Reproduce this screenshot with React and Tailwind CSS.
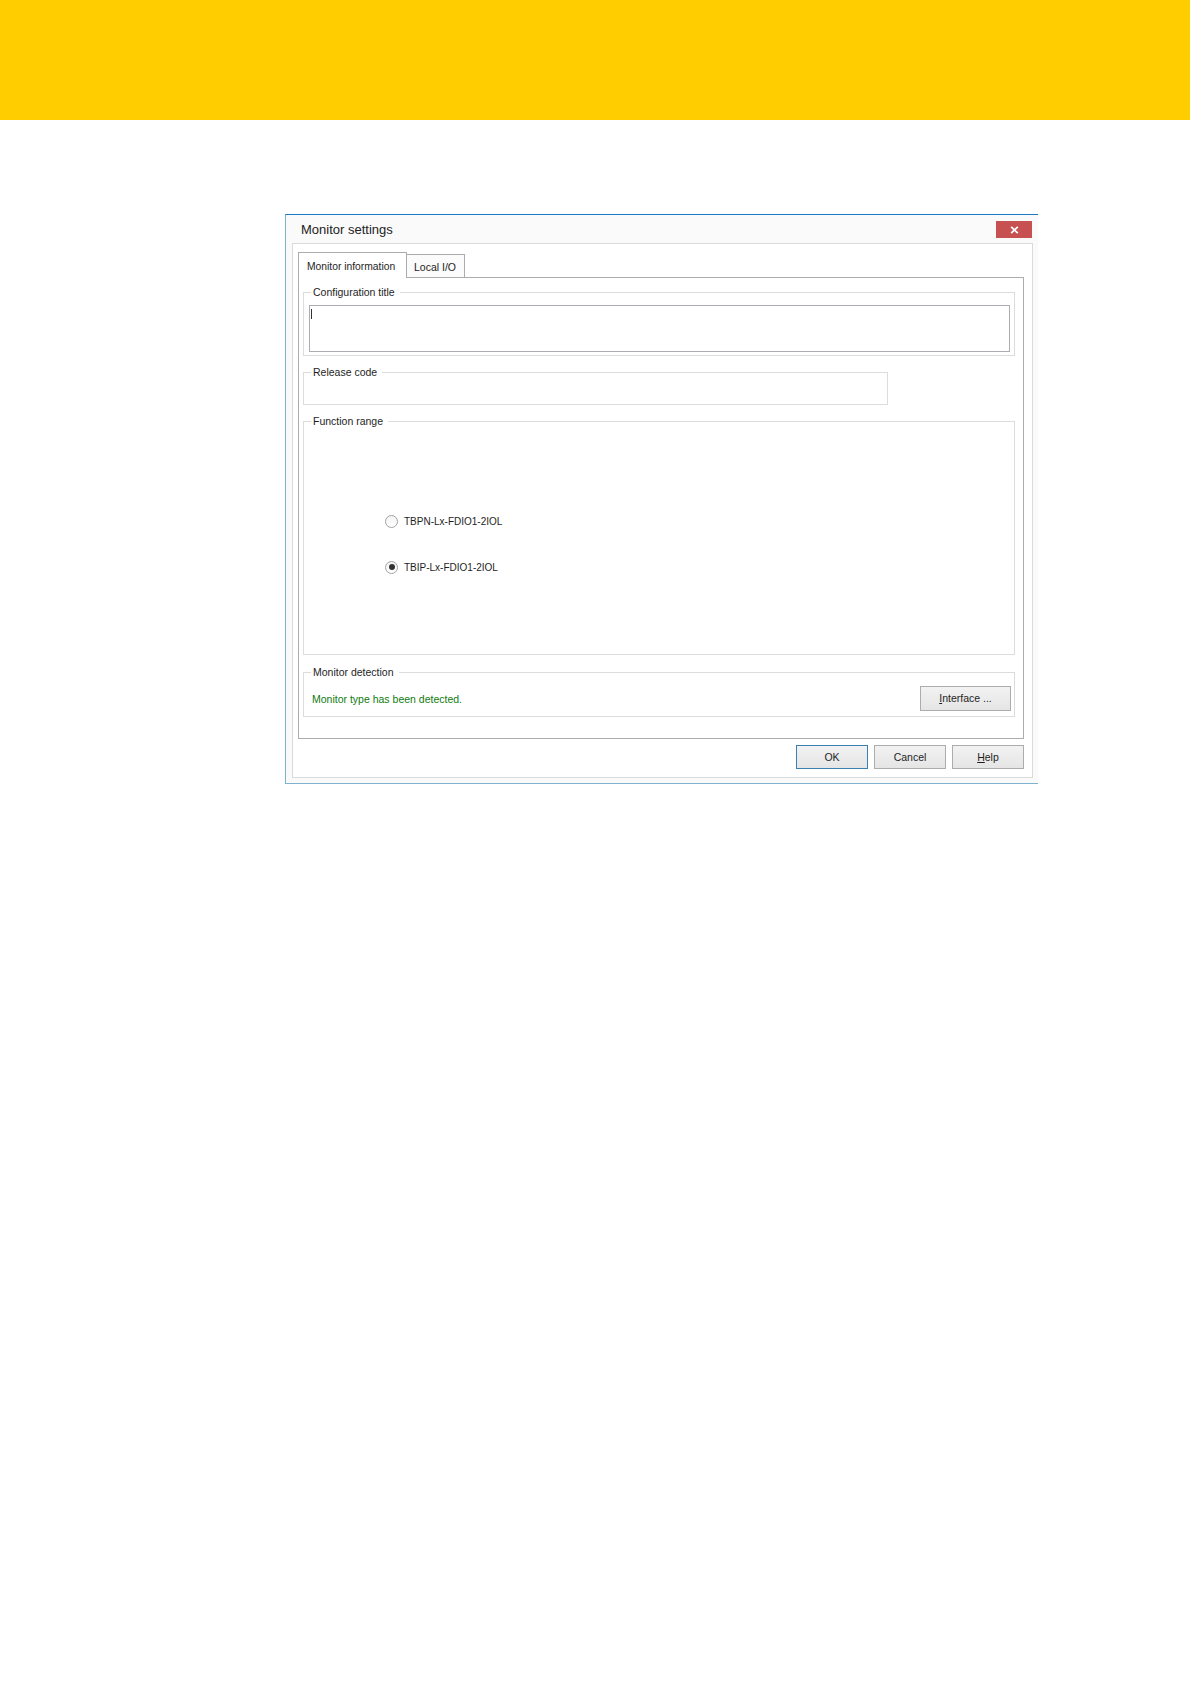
import React from "react";

function Group({ label, className, children }) {
  return (
    <div className={"relative border border-[#dcdcdc] " + className}>
      <span className="absolute -top-[7px] left-[7px] bg-white pl-[2px] pr-[5px] text-[10.5px] leading-[13px] text-[#1e1e1e] whitespace-nowrap">
        {label}
      </span>
      {children}
    </div>
  );
}

function Radio({ checked, label }) {
  return (
    <div className="flex h-[14px] items-center gap-[6px]">
      <div className="flex h-[13px] w-[13px] items-center justify-center rounded-full border border-[#a3a3a3] bg-linear-to-b from-[#f4f4f4] to-white">
        {checked && <div className="h-[6px] w-[6px] rounded-full bg-[#333333]" />}
      </div>
      <span className="text-[10px] leading-[13px] text-[#1e1e1e] whitespace-nowrap">{label}</span>
    </div>
  );
}

function Btn({ children, primary, className = "" }) {
  return (
    <div
      className={
        "flex items-center justify-center border bg-linear-to-b from-[#f2f2f2] to-[#e5e5e5] text-[10.5px] leading-[13px] text-[#1e1e1e] " +
        (primary ? "border-[#3c7fb1] " : "border-[#acacac] ") +
        className
      }
    >
      {children}
    </div>
  );
}

export default function App() {
  return (
    <div className="min-h-[1684px] w-[1190px] bg-white font-['Liberation_Sans',Arial,sans-serif]">
      <div className="h-[120px] bg-[#ffcd00]" />

      <div className="ml-[285px] mt-[94px] flex h-[570px] w-[753px] flex-col border-b border-l border-t border-b-[#7fb2cf] border-l-[#7fb2cf] border-t-[#1a7ac6] bg-[#fafafa]">
        {/* Title bar */}
        <div className="flex h-[28px] items-start justify-between">
          <span className="pl-[15px] pt-[7px] text-[13px] leading-[16px] text-[#222222]">Monitor settings</span>
          <div className="mr-[6px] mt-[6px] flex h-[17px] w-[36px] items-center justify-center bg-[#c75050]">
            <svg width="9" height="8" viewBox="0 0 9 8">
              <path d="M1.2 0.8 L7.8 7.2 M7.8 0.8 L1.2 7.2" stroke="#ffffff" strokeWidth="1.8" fill="none" />
            </svg>
          </div>
        </div>

        {/* Content panel */}
        <div className="ml-[6px] flex h-[535px] w-[741px] flex-col border border-[#dadada] bg-white pl-[5px]">
          {/* Tabs */}
          <div className="mt-[8px] flex h-[25px] items-end">
            <div className="relative z-10 -mb-px h-[26px] w-[109px] border border-b-0 border-[#acacac] bg-white pl-[8px] pt-[7px] text-[10.3px] leading-[14px] text-[#1e1e1e] whitespace-nowrap">
              Monitor information
            </div>
            <div className="h-[23px] w-[58px] border border-b-0 border-l-0 border-[#acacac] bg-[#fbfbfb] pl-[7px] pt-[5px] text-[10.5px] leading-[14px] text-[#1e1e1e] whitespace-nowrap">
              Local I/O
            </div>
          </div>

          {/* Tab panel */}
          <div className="h-[462px] w-[726px] border border-[#acacac] bg-white pl-[4px]">
            <Group label="Configuration title" className="mt-[14px] h-[64px] w-[712px]">
              <div className="ml-[5px] mt-[12px] h-[47px] w-[701px] border border-[#abadb3] bg-white pl-[1px] pt-[3px]">
                <div className="h-[10px] w-px bg-[#333333]" />
              </div>
            </Group>

            <Group label="Release code" className="mt-[16px] h-[33px] w-[585px]" />

            <Group label="Function range" className="mt-[16px] h-[234px] w-[712px]">
              <div className="flex flex-col gap-[32px] pl-[81px] pt-[92px]">
                <Radio label="TBPN-Lx-FDIO1-2IOL" />
                <Radio checked label="TBIP-Lx-FDIO1-2IOL" />
              </div>
            </Group>

            <Group label="Monitor detection" className="mt-[17px] h-[45px] w-[712px]">
              <div className="mt-[13px] flex h-[25px] items-center justify-between pl-[8px] pr-[3px]">
                <span className="pt-[2px] text-[10.5px] leading-[13px] text-[#0f7b0f] whitespace-nowrap">
                  Monitor type has been detected.
                </span>
                <Btn className="h-[25px] w-[91px]">
                  <span>
                    <span className="underline">I</span>nterface ...
                  </span>
                </Btn>
              </div>
            </Group>
          </div>

          {/* Buttons */}
          <div className="mt-[6px] flex w-[726px] justify-end gap-[6px]">
            <Btn primary className="h-[24px] w-[72px]">OK</Btn>
            <Btn className="h-[24px] w-[72px]">Cancel</Btn>
            <Btn className="h-[24px] w-[72px]">
              <span>
                <span className="underline">H</span>elp
              </span>
            </Btn>
          </div>
        </div>
      </div>
    </div>
  );
}
